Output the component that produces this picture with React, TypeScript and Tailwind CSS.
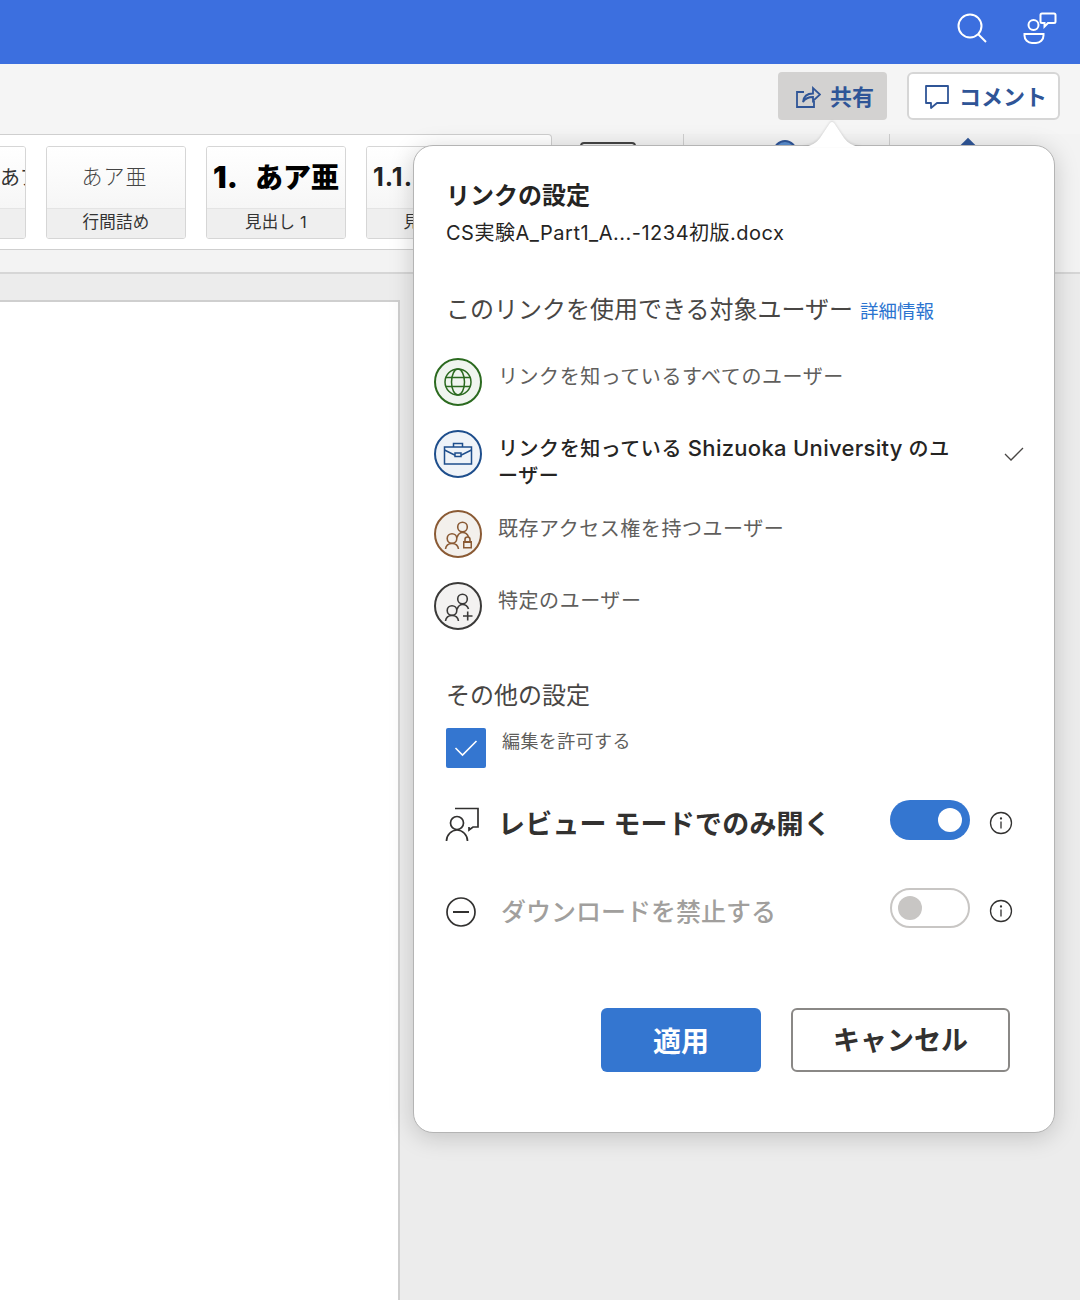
const sans = "font-['Inter','Noto_Sans_CJK_JP',sans-serif]";

function Avatar({ ring, bg, children }: { ring: string; bg: string; children: React.ReactNode }) {
    return (
        <div className={`w-12 h-12 shrink-0 rounded-full border-2 flex items-center justify-center ${ring} ${bg}`}>
            {children}
        </div>
    );
}

function People({ color, badge }: { color: string; badge: "lock" | "plus" }) {
    return (
        <svg width="32" height="32" viewBox="0 0 32 32" fill="none" stroke={color} strokeWidth="1.6">
            <circle cx="20.5" cy="9" r="4.8" />
            <path d="M15 19.5c1-3 3-5 5.500-5s5 1.500 6 4.500" />
            <circle cx="10" cy="20.5" r="4.8" />
            <path d="M3.500 31c.5-3.500 3-5.500 6.500-5.500s6 2 6.500 5.500" />
            {badge === "lock" ? (
                <>
                    <rect x="21" y="23" width="9" height="7.5" fill={color} stroke="none" />
                    <rect x="22.5" y="25" width="6" height="4" fill="#f3f0ec" stroke="none" />
                    <path d="M23 23v-1.500a2.500 2.500 0 0 1 5 0V23" />
                </>
            ) : (
                <path d="M21 26h9.500M25.700 21.500v9" />
            )}
        </svg>
    );
}

function Toggle({ on }: { on: boolean }) {
    return on ? (
        <div className="w-20 h-10 shrink-0 rounded-full bg-[#3476d0] flex items-center justify-end pr-2">
            <div className="w-6 h-6 rounded-full bg-white" />
        </div>
    ) : (
        <div className="w-20 h-10 shrink-0 rounded-full border-2 border-[#c8c6c4] flex items-center pl-[6px] pb-[1px]">
            <div className="w-6 h-6 rounded-full bg-[#c8c6c4]" />
        </div>
    );
}

function InfoIcon() {
    return (
        <svg width="24" height="24" viewBox="0 0 24 24" fill="none" stroke="#323130" strokeWidth="1.3">
            <circle cx="12" cy="12" r="10.5" />
            <path d="M12 10.5v7" />
            <circle cx="12" cy="7.5" r="0.5" fill="#323130" />
        </svg>
    );
}

function StyleCard({ sample, label, className }: { sample: React.ReactNode; label: string; className?: string }) {
    return (
        <div className={`w-[140px] h-[93px] shrink-0 rounded-[3px] border border-[#d6d6d6] overflow-hidden flex flex-col ${className ?? ""}`}>
            <div className="h-[61px] bg-gradient-to-b from-white to-[#f6f6f6] flex items-center justify-center whitespace-nowrap overflow-hidden">
                {sample}
            </div>
            <div className="flex-1 bg-[#efefef] border-t border-[#e4e4e4] pb-[3px] flex items-center justify-center text-[16.5px] tracking-[0.2px] text-[#333] whitespace-nowrap overflow-hidden">
                {label}
            </div>
        </div>
    );
}

function AudienceRow({ icon, label, bold, check, mb }: { icon: React.ReactNode; label: React.ReactNode; bold?: boolean; check?: boolean; mb: string }) {
    return (
        <div className={`flex items-start ${mb}`}>
            {icon}
            <div className={`ml-[16px] w-[460px] pt-[5px] tracking-[0.55px] whitespace-nowrap text-[20px] ${bold ? "font-medium text-[#252423] leading-[27px]" : "text-[#605e5c] leading-[28px]"}`}>
                {label}
            </div>
            {check && (
                <svg className="ml-[46px] mt-[16px]" width="20" height="16" viewBox="0 0 20 16" fill="none" stroke="#484644" strokeWidth="1.3">
                    <path d="M1 8l6 6L19 2" />
                </svg>
            )}
        </div>
    );
}

export default function App() {
    return (
        <main className={`relative w-[1080px] h-[1300px] overflow-hidden bg-[#ececec] flex flex-col ${sans}`}>
            {/* Title bar */}
            <header className="h-16 bg-[#3c6fdf] flex items-start justify-end shrink-0 pr-[23px] pt-[12px] gap-[36px]">
                <svg className="mt-[1px]" width="30" height="32" viewBox="0 0 30 32" fill="none" stroke="white" strokeWidth="2">
                    <circle cx="13" cy="13" r="11.5" />
                    <path d="M21 21l8 8" />
                </svg>
                <svg width="34" height="34" viewBox="0 0 34 34" fill="none" stroke="white" strokeWidth="2">
                    <circle cx="10.5" cy="13" r="5" />
                    <path d="M1.500 22h19v1.500a7.500 7.500 0 0 1-7.500 7.500H9a7.500 7.500 0 0 1-7.500-7.500z" />
                    <path d="M19 1.500h12a1.500 1.500 0 0 1 1.500 1.500v6.500a1.500 1.500 0 0 1-1.500 1.500h-6l-3.500 3.500V11H19a1.500 1.500 0 0 1-1.500-1.500V3A1.500 1.500 0 0 1 19 1.500z" />
                </svg>
            </header>

            {/* Share and comment */}
            <div className="h-[70px] shrink-0 bg-[#f5f5f5] flex items-start justify-end pt-2 pr-5 gap-5">
                <button className="w-[109px] h-12 pt-[2px] rounded-[4px] bg-[#d3d2d1] flex items-center pl-[17px] gap-[9px] text-[22px] font-semibold text-[#2f5597]">
                    <svg width="26" height="26" viewBox="0 0 26 26" fill="none" stroke="#2f5597" strokeWidth="1.8">
                        <path d="M9 8H2v15h17v-6" />
                        <path d="M8 18c.5-5 4-8.500 10-8.500V4l7 6.500-7 6.500v-4c-4 0-7.500 1-10 5z" />
                    </svg>
                    共有
                </button>
                <button className="w-[153px] h-12 pt-[2px] rounded-[6px] bg-white border-2 border-[#d6d6d6] flex items-center pl-[15px] gap-[9px] text-[22px] font-semibold text-[#2f5597]">
                    <svg width="26" height="26" viewBox="0 0 26 26" fill="none" stroke="#2f5597" strokeWidth="1.8">
                        <path d="M2 2h22v17H13l-6 5v-5H2z" strokeLinejoin="round" />
                    </svg>
                    コメント
                </button>
            </div>

            {/* Ribbon */}
            <div className="h-[140px] shrink-0 bg-[#f3f3f3] border-b-2 border-[#d6d6d6] flex items-start">
                <div className="w-[552px] h-[116px] shrink-0 bg-white border-y border-r border-[#cfcfcf] rounded-tr-[4px] flex items-start pt-[11px] gap-5 overflow-hidden">
                    <StyleCard
                        className="-ml-[114px]"
                        label=""
                        sample={<span className="w-full pl-[113px] text-[20px] text-[#333]">あア</span>}
                    />
                    <StyleCard
                        label="行間詰め"
                        sample={<span className="pr-[3px] pb-[2px] text-[21px] text-[#444] font-light tracking-[1px]">あア亜</span>}
                    />
                    <StyleCard
                        label="見出し 1"
                        sample={
                            <span className="flex items-baseline font-black text-black">
                                <span className="text-[30px]">1.</span>
                                <span className="ml-[17px] text-[28px]">あア亜</span>
                            </span>
                        }
                    />
                    <StyleCard
                        label="見出し 2"
                        sample={<span className="w-full pl-[6px] text-[25px] font-bold tracking-[1px] text-[#222]">1.1.</span>}
                    />
                </div>
                {/* Toolbar items that peek out above the popover */}
                <div className="flex items-start">
                    <div className="ml-[28px] mt-[8px] w-14 h-8 rounded-t-[4px] border-2 border-[#444]" />
                    <div className="ml-[47px] w-px h-8 bg-[#cfcfcf]" />
                    <div className="ml-[89px] mt-[6px] w-6 h-6 rounded-full bg-[#5b8fd0] border-2 border-[#2f5597]" />
                    <div className="ml-[92px] w-px h-8 bg-[#cfcfcf]" />
                    <div className="ml-[70px] mt-[7px] w-4 h-4 rotate-45 bg-[#2f5597]" />
                </div>
            </div>

            {/* Document canvas */}
            <div className="flex-1 pt-[26px]">
                <div className="w-[400px] h-full bg-white border-t-2 border-r-2 border-[#cfcfcf]" />
            </div>

            {/* Share popover */}
            <div className="absolute left-[413px] top-[145px] w-[642px] h-[988px] bg-white rounded-[20px] border border-[#b4b4b4] shadow-[0_4px_24px_rgba(0,0,0,0.18)] pl-[32px] pt-[34px]">
                <svg className="absolute left-[388px] top-[-27px] drop-shadow-[0_-1px_1px_rgba(0,0,0,0.12)]" width="60" height="28" viewBox="0 0 60 28">
                    <path d="M0 28C10 27 14 24 18 19L28 4Q30 2 32 4L42 19C46 24 50 27 60 28z" fill="white" />
                </svg>
                <h2 className="text-[24px] font-bold leading-8 text-[#252423]">リンクの設定</h2>
                <p className="mt-[6px] text-[20px] leading-[30px] text-[#252423] tracking-[0.5px]">CS実験A_Part1_A...-1234初版.docx</p>

                <div className="mt-[44px] flex items-baseline">
                    <span className="text-[24px] text-[#484644]">このリンクを使用できる対象ユーザー</span>
                    <a className="ml-[7px] text-[18.5px] text-[#2b74d0]">詳細情報</a>
                </div>

                <div className="mt-[30px] -ml-[12px]">
                    <AudienceRow
                        mb="mb-6"
                        label="リンクを知っているすべてのユーザー"
                        icon={
                            <Avatar ring="border-[#2b6a1f]" bg="bg-[#f0f5ef]">
                                <svg width="30" height="30" viewBox="0 0 30 30" fill="none" stroke="#2b6a1f" strokeWidth="1.5">
                                    <circle cx="15" cy="15" r="13" />
                                    <ellipse cx="15" cy="15" rx="6.5" ry="13" />
                                    <path d="M3 10.500h24M3 19.500h24" />
                                </svg>
                            </Avatar>
                        }
                    />
                    <AudienceRow
                        mb="mb-[20px]"
                        bold
                        check
                        label={
                            <>
                                リンクを知っている <span className="text-[22px] tracking-[0.3px]">Shizuoka University</span> のユ
                                <br />
                                ーザー
                            </>
                        }
                        icon={
                            <Avatar ring="border-[#1e4e8c]" bg="bg-[#eff3f8]">
                                <svg width="30" height="24" viewBox="0 0 30 24" fill="none" stroke="#1e4e8c" strokeWidth="1.5">
                                    <rect x="1.5" y="5" width="27" height="17" />
                                    <path d="M10.500 5V1.500h9V5" />
                                    <path d="M1.500 8l10 5h7l10-5" />
                                    <rect x="12" y="11" width="6" height="3.5" fill="#eff3f8" />
                                </svg>
                            </Avatar>
                        }
                    />
                    <AudienceRow
                        mb="mb-6"
                        label="既存アクセス権を持つユーザー"
                        icon={
                            <Avatar ring="border-[#8a5a34]" bg="bg-[#f3f0ec]">
                                <People color="#8a5a34" badge="lock" />
                            </Avatar>
                        }
                    />
                    <AudienceRow
                        mb="mb-0"
                        label="特定のユーザー"
                        icon={
                            <Avatar ring="border-[#3b3a39]" bg="bg-[#f3f2f1]">
                                <People color="#3b3a39" badge="plus" />
                            </Avatar>
                        }
                    />
                </div>

                <h3 className="mt-[50px] text-[24px] leading-8 text-[#484644]">その他の設定</h3>

                <div className="mt-[16px] flex items-start">
                    <div className="w-10 h-10 rounded-[2px] bg-[#3476d0] flex items-center justify-center">
                        <svg width="24" height="18" viewBox="0 0 24 18" fill="none" stroke="white" strokeWidth="1.6">
                            <path d="M1.500 9l7 7L22.500 2" />
                        </svg>
                    </div>
                    <span className="ml-4 pt-[1px] text-[18px] leading-[26px] tracking-[0.4px] text-[#605e5c]">編集を許可する</span>
                </div>

                <div className="mt-[32px] flex items-start h-10">
                    <svg className="mt-[7px] -ml-[1px] shrink-0" width="34" height="34" viewBox="0 0 34 34" fill="none" stroke="#323130" strokeWidth="1.7">
                        <path d="M10 1.500h23V20h-5l-4 3v-3" />
                        <circle cx="12" cy="16" r="6.5" />
                        <path d="M1.500 34c0-6 5-11 10.500-11s10.500 5 10.500 11" />
                    </svg>
                    <span className="ml-[19px] w-[392px] shrink-0 text-[27px] tracking-[0.2px] leading-[50px] font-bold text-[#323130] whitespace-nowrap">レビュー モードでのみ開く</span>
                    <Toggle on />
                    <div className="ml-[19px] mt-[11px]">
                        <InfoIcon />
                    </div>
                </div>

                <div className="mt-[48px] flex items-start h-10">
                    <svg className="mt-[9px] shrink-0" width="30" height="30" viewBox="0 0 30 30" fill="none" stroke="#323130" strokeWidth="1.7">
                        <circle cx="15" cy="15" r="14" />
                        <path d="M7 15h16" strokeWidth="2" />
                    </svg>
                    <span className="ml-[25px] w-[389px] shrink-0 text-[25px] leading-[48px] font-medium text-[#a19f9d] whitespace-nowrap">ダウンロードを禁止する</span>
                    <Toggle on={false} />
                    <div className="ml-[19px] mt-[11px]">
                        <InfoIcon />
                    </div>
                </div>

                <div className="mt-[80px] ml-[155px] flex gap-[30px]">
                    <button className="w-40 h-16 pt-[3px] rounded-[6px] bg-[#3476d0] text-white text-[28px] font-bold">適用</button>
                    <button className="w-[219px] h-16 pt-[3px] rounded-[6px] bg-white border-2 border-[#8a8886] text-[#323130] text-[27px] font-bold">キャンセル</button>
                </div>
            </div>
        </main>
    );
}
